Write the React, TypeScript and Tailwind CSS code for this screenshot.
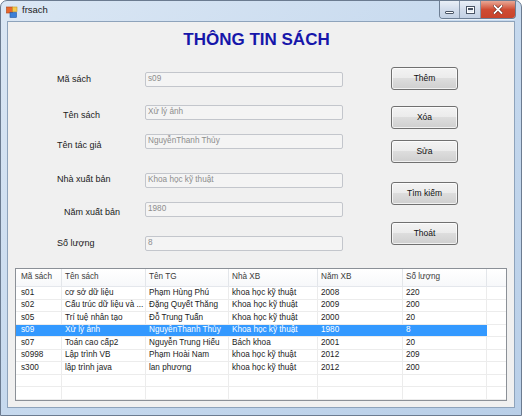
import React from "react";

const fields = [
  { label: "Mã sách", value: "s09", mt: "mt-[14px]", pl: "pl-[49px]", lbl: "" },
  { label: "Tên sách", value: "Xử lý ảnh", mt: "mt-[18px]", pl: "pl-[55px]", lbl: "mt-[5px]" },
  { label: "Tên tác giả", value: "NguyễnThanh Thủy", mt: "mt-[14px]", pl: "pl-[49px]", lbl: "mt-[7px]" },
  { label: "Nhà xuất bản", value: "Khoa học kỹ thuật", mt: "mt-[24px]", pl: "pl-[49px]", lbl: "mb-[3px]" },
  { label: "Năm xuất bản", value: "1980", mt: "mt-[14px]", pl: "pl-[56px]", lbl: "mt-[5px]" },
  { label: "Số lượng", value: "8", mt: "mt-[19px]", pl: "pl-[49px]", lbl: "" },
];

const buttons = [
  { text: "Thêm", mt: "mt-[9px]" },
  { text: "Xóa", mt: "mt-[16px]" },
  { text: "Sửa", mt: "mt-[11px]" },
  { text: "Tìm kiếm", mt: "mt-[19px]" },
  { text: "Thoát", mt: "mt-[17px]" },
];

const cols = [
  { name: "Mã sách", w: "w-[46px] pl-[5px]" },
  { name: "Tên sách", w: "w-[84px] pl-[3px]" },
  { name: "Tên TG", w: "w-[83px] pl-[3px]" },
  { name: "Nhà XB", w: "w-[89px] pl-[3px]" },
  { name: "Năm XB", w: "w-[85px] pl-[3px]" },
  { name: "Số lượng", w: "w-[84px] pl-[3px]" },
];

const rows = [
  ["s01", "cơ sở dữ liệu", "Phạm Hùng Phú", "khoa học kỹ thuật", "2008", "220"],
  ["s02", "Cấu trúc dữ liệu và ...", "Đặng Quyết Thắng", "Khoa học kỹ thuật", "2009", "200"],
  ["s05", "Trí tuệ nhân tạo", "Đỗ Trung Tuấn", "Khoa học kỹ thuật", "2000", "20"],
  ["s09", "Xử lý ảnh", "NguyễnThanh Thủy", "Khoa học kỹ thuật", "1980", "8"],
  ["s07", "Toán cao cấp2", "Nguyễn Trung Hiếu", "Bách khoa", "2001", "20"],
  ["s0998", "Lập trình VB", "Phạm Hoài Nam", "khoa học kỹ thuật", "2012", "209"],
  ["s300", "lập trình java", "lan phương", "khoa học kỹ thuật", "2012", "200"],
  ["", "", "", "", "", ""],
  ["", "", "", "", "", ""],
];

function AppIcon() {
  return (
    <svg width="12" height="12" viewBox="0 0 12 12" className="mt-[5px] ml-[5px]">
      <rect x="0.5" y="1" width="6" height="6" fill="#e8672c" stroke="#b04414" strokeWidth="0.6" />
      <rect x="6.5" y="1" width="4.5" height="4.5" fill="#f6c94d" stroke="#c69a22" strokeWidth="0.6" />
      <rect x="4" y="6.5" width="6.5" height="5" fill="#3c7fd6" stroke="#23579f" strokeWidth="0.6" />
    </svg>
  );
}

function TitleControls() {
  return (
    <div className="mr-[5px] flex h-[18px] overflow-hidden rounded-b-[4px] border border-t-0 border-[#6d7e94] shadow-[0_1px_0_rgba(255,255,255,0.6)]">
      <div className="flex w-[20px] items-center justify-center border-r border-[#8796aa] bg-gradient-to-b from-[#e9eff7] via-[#d2dceb] to-[#c3d1e4]">
        <div className="mt-[5px] h-[3px] w-[9px] rounded-[1px] border border-[#4a5566] bg-white" />
      </div>
      <div className="flex w-[21px] items-center justify-center border-r border-[#8796aa] bg-gradient-to-b from-[#e9eff7] via-[#d2dceb] to-[#c3d1e4]">
        <div className="h-[8px] w-[9px] border border-[#4a5566] bg-white p-[1px]">
          <div className="h-full w-full border-t-2 border-[#4a5566] bg-[#e6ecf4]" />
        </div>
      </div>
      <div className="flex w-[34px] items-center justify-center bg-gradient-to-b from-[#e8a795] via-[#cf4c33] to-[#c8442b]">
        <svg width="10" height="9" viewBox="0 0 10 9">
          <path d="M1.5 1 L8.5 8 M8.5 1 L1.5 8" stroke="#5a1a10" strokeWidth="3" strokeLinecap="square" />
          <path d="M1.5 1 L8.5 8 M8.5 1 L1.5 8" stroke="#ffffff" strokeWidth="1.8" strokeLinecap="square" />
        </svg>
      </div>
    </div>
  );
}

export default function App() {
  return (
    <div className="font-['Liberation_Sans',Arial,sans-serif]">
      <div className="flex h-[416px] w-[522px] flex-col rounded-t-[7px] border border-[#6b7b90] bg-gradient-to-br from-[#dbe7f4] via-[#c6d9ee] to-[#b9cfe8]">
        <div className="flex h-[20px] items-start justify-between">
          <div className="flex items-start">
            <AppIcon />
            <span className="ml-[4px] mt-[3px] text-[9.5px] leading-[12px] text-[#1b1b1b]">frsach</span>
          </div>
          <TitleControls />
        </div>

        <div className="mx-[6px] mb-[7px] flex flex-1 flex-col border border-[#8ea3bb] bg-[#f0f0f0]">
          <div className="flex h-[36px] items-center justify-center pr-[9px]">
            <span className="text-[17px] font-bold leading-[20px] text-[#1616aa]">THÔNG TIN SÁCH</span>
          </div>

          <div className="flex items-start">
            <div className="flex flex-col">
              {fields.map((f) => (
                <div key={f.label} className={`flex h-[15px] items-center ${f.mt}`}>
                  <div className={`w-[137px] ${f.pl}`}>
                    <span className={`block text-[9px] leading-[11px] text-[#1a1a1a] ${f.lbl}`}>{f.label}</span>
                  </div>
                  <div className="flex h-[15px] w-[198px] items-center rounded-[2px] border border-[#c3c6cc] bg-[#f4f4f4] pl-[2px] text-[8.2px] text-[#8d8d8d]">
                    {f.value}
                  </div>
                </div>
              ))}
            </div>

            <div className="ml-[48px] flex flex-col">
              {buttons.map((b) => (
                <div
                  key={b.text}
                  className={`flex h-[23px] w-[67px] items-center justify-center rounded-[3px] border border-[#707070] bg-[linear-gradient(to_bottom,#f3f3f3_0%,#ebebeb_49%,#dddddd_50%,#cfcfcf_100%)] text-[8.5px] text-[#111] shadow-[inset_0_0_0_1px_rgba(255,255,255,0.7)] ${b.mt}`}
                >
                  {b.text}
                </div>
              ))}
            </div>
          </div>

          <div className="ml-[7px] mt-[17px] flex h-[133px] w-[492px] flex-col overflow-hidden border border-[#8b9097] bg-white text-[8.2px]">
            <div className="flex h-[18px] border-b border-[#e4e7ec] bg-gradient-to-b from-white to-[#f7f8fa] text-[#3b3b3b]">
              {cols.map((c) => (
                <div key={c.name} className={`flex items-center border-r border-[#e3e6ea] ${c.w}`}>
                  {c.name}
                </div>
              ))}
              <div className="flex-1" />
            </div>
            {rows.map((r, i) => {
              const sel = i === 3;
              return (
                <div key={i} className="flex h-[12.5px] shrink-0 border-b border-[#ececec] leading-[12px]">
                  {r.map((cell, j) => (
                    <div
                      key={j}
                      className={`flex items-center overflow-hidden whitespace-nowrap border-r ${cols[j].w} ${
                        sel ? "border-[#3399ff] bg-[#3399ff] text-white" : "border-[#ececec] text-[#1c1c1c]"
                      }`}
                    >
                      {cell}
                    </div>
                  ))}
                  <div className="flex-1" />
                </div>
              );
            })}
          </div>
        </div>
      </div>
    </div>
  );
}
